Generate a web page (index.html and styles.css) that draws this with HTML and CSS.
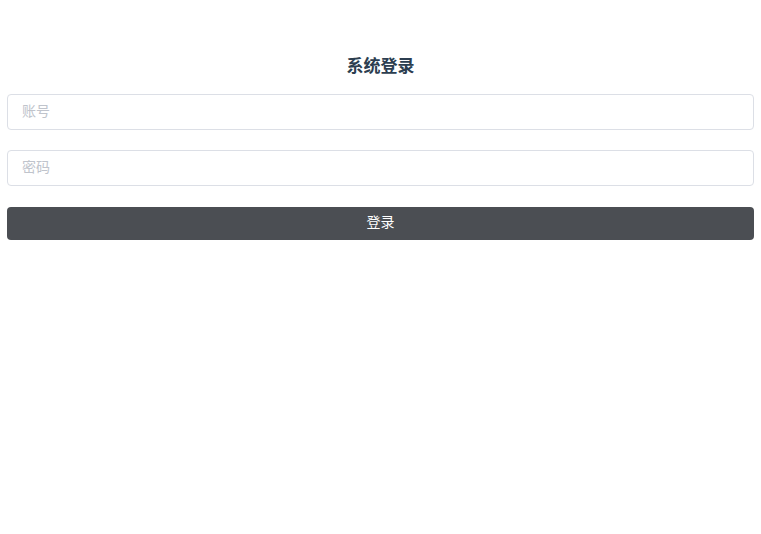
FILE: index.html
```html
<!DOCTYPE html>
<html lang="zh">
<head>
<meta charset="utf-8">
<title>系统登录</title>
<link rel="stylesheet" href="styles.css">
</head>
<body>
<div class="login">
  <h3 class="title">系统登录</h3>
  <form class="form">
    <div class="field"><input class="input" type="text" placeholder="账号"></div>
    <div class="field"><input class="input" type="password" placeholder="密码"></div>
    <button class="btn" type="button">登录</button>
  </form>
</div>
</body>
</html>
```
FILE: styles.css
```css
html, body {
  margin: 0;
  padding: 0;
  background: #ffffff;
}
body {
  font-family: "Noto Sans CJK SC", "Liberation Sans", sans-serif;
}
.login {
  padding: 53px 7px 0;
}
.title {
  margin: 0 0 17px;
  text-align: center;
  font-size: 17px;
  font-weight: 700;
  line-height: 24px;
  color: #2c3e50;
}
.form {
  display: flex;
  flex-direction: column;
  gap: 20px;
  margin: 0;
}
.field {
  display: flex;
}
.input {
  flex: 1;
  height: 36px;
  box-sizing: border-box;
  border: 1px solid #dcdfe6;
  border-radius: 4px;
  padding: 0 14px 5px;
  font-family: inherit;
  font-size: 14px;
  color: #606266;
  outline: none;
  background: #fff;
}
.input::placeholder {
  color: #c0c4cc;
}
.btn {
  margin-top: 1px;
  height: 33px;
  padding: 0 0 5px;
  border: none;
  border-radius: 4px;
  background: #4b4e53;
  color: #ffffff;
  font-family: inherit;
  font-size: 14px;
  cursor: pointer;
}
```
